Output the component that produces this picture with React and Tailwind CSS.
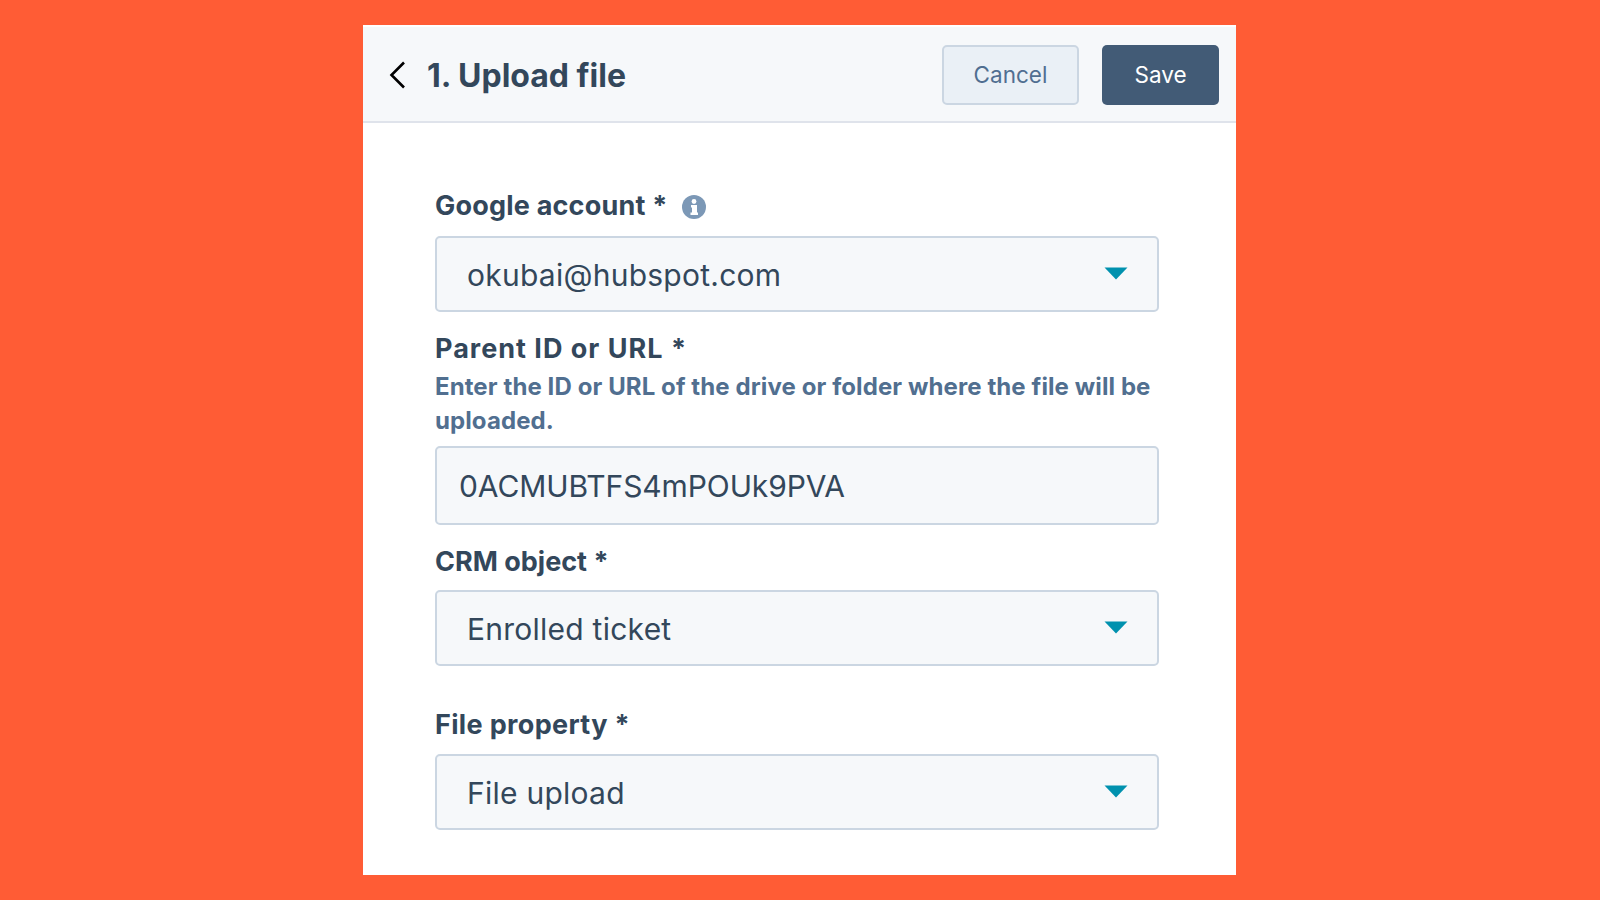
// App.jsx
const labelClass = "text-[27px] leading-[34px] font-bold text-[#33475b]";
const fieldClass = "flex items-center rounded-[5px] border-2 border-[#cbd6e2] bg-[#f6f8fa] text-[30px] pt-[2px] text-[#33475b]";

function Caret() {
  return (
    <svg width="24" height="13" viewBox="0 0 24 13" className="shrink-0 mb-[4px]">
      <path d="M0.5 0.5H23.5L12 12.5Z" fill="#0091ae" />
    </svg>
  );
}

function InfoIcon() {
  return (
    <svg width="24" height="24" viewBox="0 0 24 24" className="mt-[1px]">
      <circle cx="12" cy="12" r="12" fill="#7c98b6" />
      <circle cx="12" cy="6.5" r="2.4" fill="#fff" />
      <path d="M9 10H15V17.5H16V20H8.5V17.5H10V12.5H9Z" fill="#fff" />
    </svg>
  );
}

function Select({ value, className }) {
  return (
    <div className={`${fieldClass} h-[76px] justify-between pl-[30px] pr-[29px] tracking-[0.25px] ${className}`}>
      <span>{value}</span>
      <Caret />
    </div>
  );
}

export default function App() {
  return (
    <div className="min-h-[900px] bg-[#ff5c35] pl-[363px] pt-[25px] font-['Inter',sans-serif]">
      <div className="w-[873px] h-[850px] bg-white border-t-2 border-[#ffffff]">
        {/* header */}
        <div className="h-[96px] bg-[#f6f8fa] border-b-2 border-[#dfe3eb] flex items-center pl-[26px] pr-[17px]">
          <svg width="18" height="28" viewBox="0 0 18 28" className="mr-[20px] mt-[2px]">
            <path d="M15 1.5L2.5 14L15 26.5" fill="none" stroke="#000" strokeWidth="2.6" />
          </svg>
          <h1 className="text-[32px] font-bold text-[#33475b] mt-[3px]">1. Upload file</h1>
          <div className="ml-auto flex gap-[23px] mt-[2px]">
            <button className="w-[137px] h-[60px] rounded-[5px] border-2 border-[#cbd6e2] bg-[#eaf0f6] text-[22.5px] text-[#506e91]">
              Cancel
            </button>
            <button className="w-[117px] h-[60px] rounded-[5px] bg-[#425b76] text-[22.5px] text-white">
              Save
            </button>
          </div>
        </div>

        {/* form */}
        <div className="pl-[72px] pr-[77px] pt-[66px]">
          <div className={`${labelClass} tracking-[0.2px] flex items-center gap-[15px]`}>
            <span>Google account *</span>
            <InfoIcon />
          </div>
          <Select value="okubai@hubspot.com" className="mt-[13px]" />

          <div className={`${labelClass} tracking-[1px] mt-[20px]`}>Parent ID or URL *</div>
          <p className="mt-[4px] text-[24px] leading-[34px] font-bold text-[#516f90] tracking-[0.1px]">
            Enter the ID or URL of the drive or folder where the file will be uploaded.
          </p>
          <div className={`${fieldClass} h-[79px] pl-[22px] mt-[8px] tracking-[-0.1px]`}>0ACMUBTFS4mPOUk9PVA</div>

          <div className={`${labelClass} mt-[20px]`}>CRM object *</div>
          <Select value="Enrolled ticket" className="mt-[11px]" />

          <div className={`${labelClass} tracking-[0.35px] mt-[42px]`}>File property *</div>
          <Select value="File upload" className="mt-[12px]" />
        </div>
      </div>
    </div>
  );
}
